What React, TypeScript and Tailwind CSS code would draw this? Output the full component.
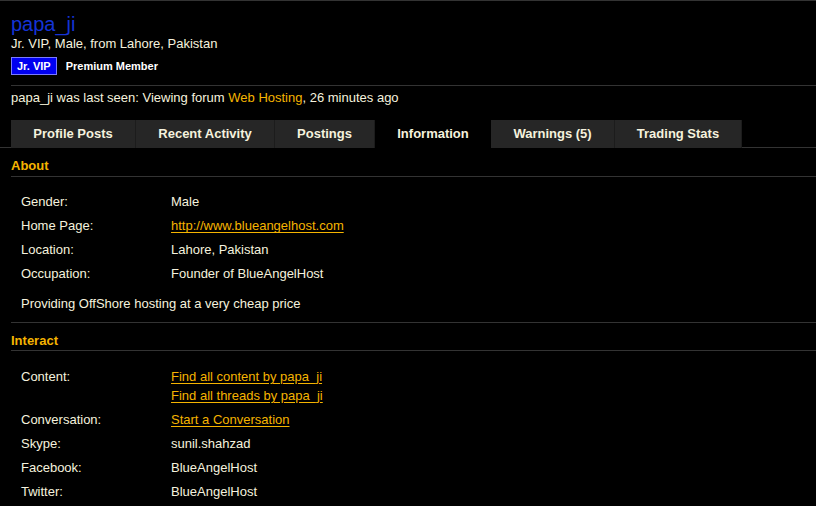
import React from "react";

const tabs = [
  { label: "Profile Posts", w: "w-[125px]" },
  { label: "Recent Activity", w: "w-[139px]" },
  { label: "Postings", w: "w-[100px]" },
  { label: "Information", w: "w-[116px]", active: true },
  { label: "Warnings (5)", w: "w-[124px]" },
  { label: "Trading Stats", w: "w-[127px]" },
];

function Row({ label, children }: { label: string; children: React.ReactNode }) {
  return (
    <div className="flex h-[24px] items-center">
      <div className="w-[150px] shrink-0">{label}</div>
      <div>{children}</div>
    </div>
  );
}

const link = "text-[#f5b400] underline underline-offset-2";

export default function App() {
  return (
    <div
      className="w-[816px] h-[506px] overflow-hidden bg-black text-[13px] text-[#f5f2de]"
      style={{ fontFamily: '"Liberation Sans", Arial, sans-serif' }}
    >
      <div className="h-[2px] border-t border-[#333]" />
      <div className="pl-[11px]">
        <div className="text-[20px] leading-[22px] pt-[11px] text-[#1433d6]">papa_ji</div>
        <div className="leading-[16px] mt-[1px]">Jr. VIP, Male, from Lahore, Pakistan</div>
        <div className="flex items-center mt-[5px] h-[18px]">
          <span className="h-[18px] px-[5px] border border-[#7a7aff] bg-[#0000f0] text-white font-bold text-[11px] leading-[16px]">
            Jr. VIP
          </span>
          <span className="ml-[9px] font-bold text-[11px] text-white">Premium Member</span>
        </div>
        <div className="mt-[10px] border-t border-[#333]" />
        <div className="leading-[16px] pt-[4px]">
          papa_ji was last seen: Viewing forum <span className="text-[#f5b400]">Web Hosting</span>, 26 minutes ago
        </div>
      </div>
      <div className="mt-[14px] border-b border-[#333] pl-[11px] flex h-[28px]">
        {tabs.map((t) => (
          <div
            key={t.label}
            className={`${t.w} h-[28px] flex items-center justify-center font-bold ${
              t.active ? "bg-black relative z-10 -mb-[1px] pb-[1px]" : "bg-[#262626] border-r border-[#1c1c1c]"
            }`}
          >
            {t.label}
          </div>
        ))}
      </div>
      <div className="pl-[11px]">
        <div className="h-[29px] flex items-end pb-[1px] border-b border-[#333] font-bold text-[#f5b400]">About</div>
        <div className="pl-[10px] pt-[13px]">
          <Row label="Gender:">Male</Row>
          <Row label="Home Page:">
            <span className={link}>http://www.blueangelhost.com</span>
          </Row>
          <Row label="Location:">Lahore, Pakistan</Row>
          <Row label="Occupation:">Founder of BlueAngelHost</Row>
          <div className="h-[36px] flex items-center">Providing OffShore hosting at a very cheap price</div>
        </div>
        <div className="border-t border-[#333]" />
        <div className="h-[28px] flex items-end pb-0 border-b border-[#333] font-bold text-[#f5b400]">Interact</div>
        <div className="pl-[10px] pt-[16px]">
          <div className="flex">
            <div className="w-[150px] shrink-0 leading-[19px]">Content:</div>
            <div className="leading-[19px]">
              <div className={link}>Find all content by papa_ji</div>
              <div className={link}>Find all threads by papa_ji</div>
            </div>
          </div>
          <div className="pt-[3px]">
            <Row label="Conversation:">
              <span className={link}>Start a Conversation</span>
            </Row>
            <Row label="Skype:">sunil.shahzad</Row>
            <Row label="Facebook:">BlueAngelHost</Row>
            <Row label="Twitter:">BlueAngelHost</Row>
          </div>
        </div>
      </div>
    </div>
  );
}
